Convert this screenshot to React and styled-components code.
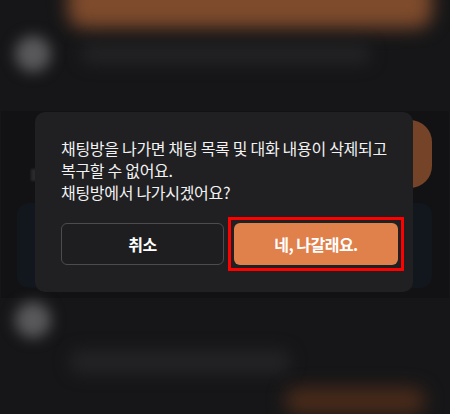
import React from "react";
import styled, { createGlobalStyle } from "styled-components";

const Global = createGlobalStyle`
  html, body { margin: 0; padding: 0; background: #131315; }
  * { box-sizing: border-box; }
`;

const Page = styled.div`
  width: 450px;
  height: 414px;
  overflow: hidden;
  background: #161618;
  display: flex;
  flex-direction: column;
  font-family: "Noto Sans CJK KR", "Noto Sans", sans-serif;
`;

const BlurSection = styled.div`
  height: ${(p) => p.$h}px;
  display: flex;
  flex-direction: column;
  flex-shrink: 0;
`;

const OrangeBlur = styled.div`
  margin-left: ${(p) => p.$left}px;
  margin-top: ${(p) => p.$top}px;
  width: ${(p) => p.$w}px;
  height: ${(p) => p.$h}px;
  border-radius: 16px;
  background: ${(p) => p.$color};
  filter: blur(9px);
`;

const BlurRow = styled.div`
  display: flex;
  align-items: center;
  gap: ${(p) => p.$gap}px;
  padding-left: ${(p) => p.$left ?? 15}px;
  margin-top: ${(p) => p.$top}px;
`;

const AvatarBlur = styled.div`
  width: 36px;
  height: 36px;
  border-radius: 50%;
  background: #59595b;
  filter: blur(7px);
  flex-shrink: 0;
`;

const LineBlur = styled.div`
  width: ${(p) => p.$w}px;
  height: ${(p) => p.$h}px;
  background: #232325;
  border-radius: 10px;
  filter: blur(8px);
`;

const Band = styled.div`
  position: relative;
  height: 187px;
  margin: 0 1px;
  background: #121214;
  display: flex;
  flex-direction: column;
  flex-shrink: 0;
`;

const PillRow = styled.div`
  display: flex;
  justify-content: flex-end;
  align-items: center;
  padding: 9px 17px 0 0;
  height: 77px;
`;

const Pill = styled.div`
  width: 60px;
  height: 68px;
  border-radius: 22px;
  background: #754327;
`;

const GhostText = styled.div`
  position: absolute;
  left: 30px;
  top: 58px;
  width: 6px;
  height: 12px;
  background: #2a2a2c;
  filter: blur(1px);
`;

const Card = styled.div`
  margin: 15px 17px 0 16px;
  height: 85px;
  border-radius: 12px;
  background: #12171d;
`;

const Dialog = styled.div`
  position: absolute;
  left: 34px;
  top: 1px;
  width: 378px;
  height: 180px;
  border-radius: 10px;
  background: #202022;
  padding: 25px 14px 0 26px;
  display: flex;
  flex-direction: column;
`;

const Message = styled.p`
  margin: 0;
  color: #f2f2f2;
  font-size: 16px;
  line-height: 22px;
  letter-spacing: -0.3px;
  font-weight: 400;
`;

const Buttons = styled.div`
  display: grid;
  grid-template-columns: 163px 164px;
  gap: 10px;
  margin-top: 20px;
`;

const Button = styled.button`
  position: relative;
  height: 42px;
  border-radius: 6px;
  font-family: inherit;
  font-size: 16px;
  font-weight: 700;
  letter-spacing: -0.5px;
  color: #ffffff;
  cursor: pointer;
  border: ${(p) => (p.$primary ? "none" : "1px solid #4c4c50")};
  background: ${(p) => (p.$primary ? "#e0804b" : "#1e1e20")};

  &::after {
    content: "";
    display: ${(p) => (p.$highlight ? "block" : "none")};
    position: absolute;
    inset: -6px;
    border: 3px solid #ff0000;
    pointer-events: none;
  }
`;

export default function App() {
  return (
    <>
      <Global />
      <Page>
        <BlurSection $h={111}>
          <OrangeBlur $left={68} $top={-22} $w={364} $h={50} $color="#7e4b2c" />
          <BlurRow $gap={30} $top={8}>
            <AvatarBlur />
            <LineBlur $w={290} $h={20} />
          </BlurRow>
        </BlurSection>
        <Band>
          <PillRow>
            <Pill />
          </PillRow>
          <GhostText />
          <Card />
          <Dialog>
            <Message>
              채팅방을 나가면 채팅 목록 및 대화 내용이 삭제되고
              <br />
              복구할 수 없어요.
              <br />
              채팅방에서 나가시겠어요?
            </Message>
            <Buttons>
              <Button>취소</Button>
              <Button $primary $highlight>
                네, 나갈래요.
              </Button>
            </Buttons>
          </Dialog>
        </Band>
        <BlurSection $h={116}>
          <BlurRow $gap={30} $top={4}>
            <AvatarBlur />
          </BlurRow>
          <BlurRow $gap={0} $top={12} $left={70}>
            <LineBlur $w={220} $h={24} />
          </BlurRow>
          <OrangeBlur $left={285} $top={14} $w={140} $h={30} $color="#4a2b1a" />
        </BlurSection>
      </Page>
    </>
  );
}
